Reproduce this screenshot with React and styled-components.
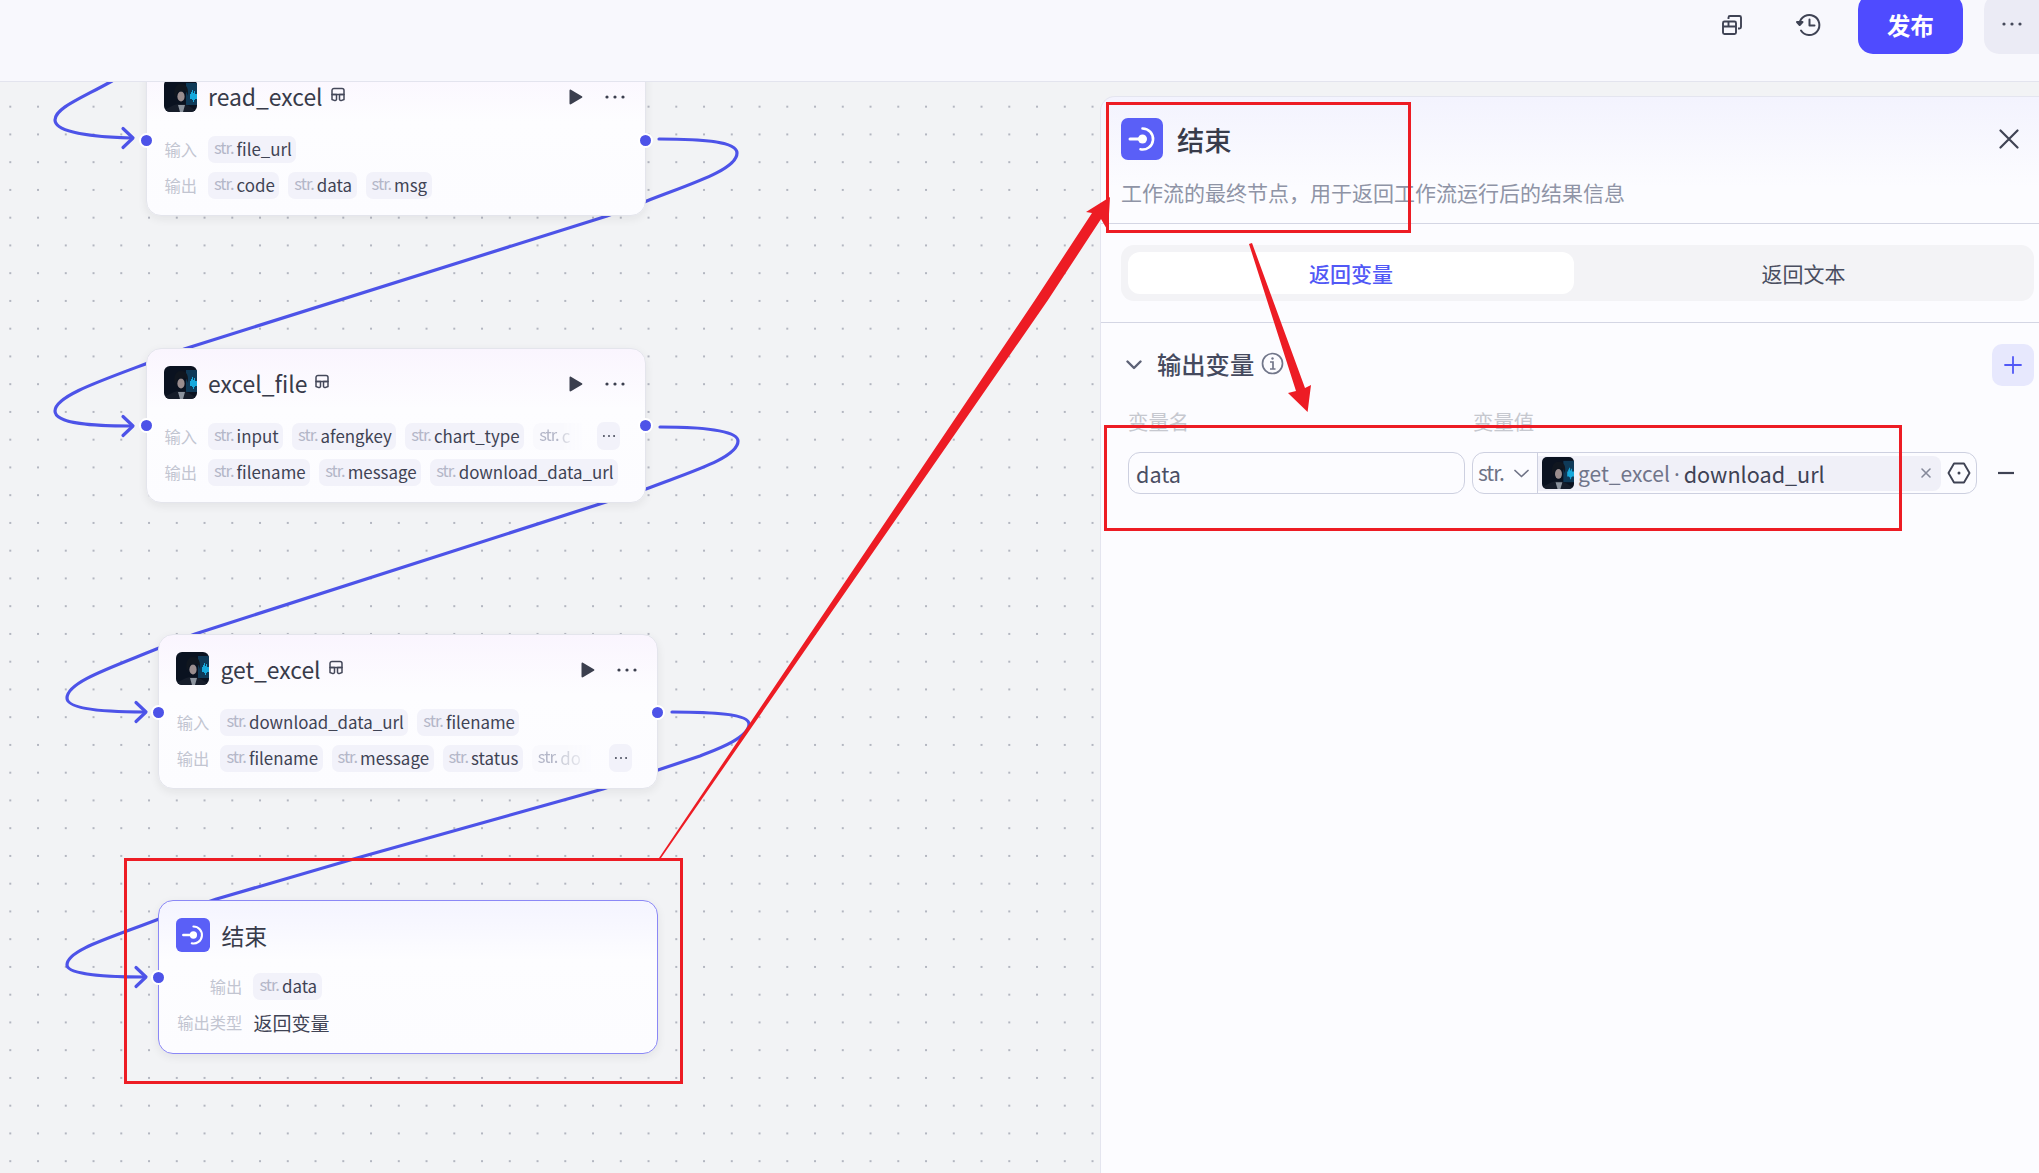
import React from "react";
import styled, { createGlobalStyle } from "styled-components";

const BLUE = "#4d53e8";
const FONT = `"Noto Sans CJK SC", "Noto Sans", sans-serif`;

const GlobalStyle = createGlobalStyle`
  html, body {
    margin: 0;
    padding: 0;
    background: #f2f3f5;
  }
  * {
    box-sizing: border-box;
  }
  body {
    font-family: ${FONT};
  }
`;

const edges = [
  "M112 81 C82 98 55 108 55 120 C55 133 95 137 131 138",
  "M659 139 C700 139 737 141 737 153 C737 170 690 184 645 201.7 L607 216 L185 348.7 C120 375 55 393 55 411 C55 424 95 426 131 426",
  "M660 427 C700 427 738 430 738 441 C738 458 690 472 646 489 L606 502 L195 634 L159 648 C110 668 67 682 67 698 C67 710 110 712 144 712",
  "M672 712 C712 712 749 714 749 724 C749 738 715 750 700 756 L658 770 L603 789 L357 858 L216.5 899 L159 919 C110 938 67 950 67 965 C67 975 110 977 144 977",
];

const arrowTips = [
  [133, 138],
  [133, 426],
  [146, 712],
  [146, 977],
];

const nodes = [
  {
    name: "read_excel",
    left: 146,
    top: -21,
    handleY: 71,
    inputs: ["file_url"],
    outputs: ["code", "data", "msg"],
  },
  {
    name: "excel_file",
    left: 146,
    top: 266,
    handleY: 69,
    inputs: ["input", "afengkey", "chart_type"],
    inputsMore: "c",
    outputs: ["filename", "message", "download_data_url"],
  },
  {
    name: "get_excel",
    left: 158.4,
    top: 552,
    handleY: 70,
    inputs: ["download_data_url", "filename"],
    outputs: ["filename", "message", "status"],
    outputsMore: "do",
  },
];

const Page = styled.div`
  width: 2039px;
  height: 1173px;
  position: relative;
  overflow: hidden;
  display: flex;
  flex-direction: column;
  font-family: ${FONT};
`;

const TopBar = styled.header`
  height: 82px;
  flex: none;
  display: flex;
  justify-content: flex-end;
  align-items: flex-start;
  padding-right: 0;
  background: #f8f8fd;
  border-bottom: 1.5px solid #e3e4ee;
`;

const BarIcon = styled.button`
  width: 40px;
  height: 50px;
  margin-right: ${(p) => p.$gap}px;
  padding: 0;
  border: none;
  background: none;
  color: #3f4354;
  display: flex;
  align-items: center;
  justify-content: center;
`;

const PublishButton = styled.button`
  width: 105px;
  height: 60px;
  margin-top: -6px;
  margin-right: 21px;
  border: none;
  border-radius: 15px;
  background: #4f4bff;
  color: #fff;
  font-family: ${FONT};
  font-size: 23.4px;
  font-weight: 700;
  padding-top: 3px;
`;

const MoreButton = styled.button`
  width: 70px;
  height: 60px;
  margin-top: -6px;
  margin-right: -15px;
  border: none;
  border-radius: 15px;
  background: #ebebf5;
  color: #45495a;
  display: flex;
  justify-content: flex-start;
  align-items: center;
  padding: 0 0 0 17px;
`;

const Main = styled.main`
  flex: 1;
  display: flex;
  min-height: 0;
`;

const Canvas = styled.section`
  width: 1100px;
  flex: none;
  position: relative;
  overflow: hidden;
  background-color: #f2f3f5;
  background-image: radial-gradient(circle, #b3b6c0 0.8px, transparent 1px);
  background-size: 27.75px 27.75px;
  background-position: -3.6px 10.8px;
`;

const EdgeLayer = styled.svg`
  position: absolute;
  left: 0;
  top: 0;
`;

const NodeCard = styled.article`
  position: absolute;
  left: ${(p) => p.$left}px;
  top: ${(p) => p.$top}px;
  width: 500px;
  height: ${(p) => (p.$selected ? 154 : 155)}px;
  padding: 17px;
  border-radius: 15px;
  border: 1.3px solid ${(p) => (p.$selected ? "#8b88f6" : "#e4e5ec")};
  background: linear-gradient(
    180deg,
    ${(p) => (p.$selected ? "#f4f4ff" : "#faf5fe")} 0,
    #fdfdff 60px,
    #fcfcff 100%
  );
  box-shadow: 0 3px 10px rgba(29, 28, 35, 0.07);
`;

const NodeHeader = styled.div`
  display: flex;
  align-items: center;
  height: 33px;
  margin-bottom: ${(p) => p.$gap || 23}px;
`;

const NodeTitle = styled.span`
  margin-left: 11px;
  font-size: 22.9px;
  line-height: 26px;
  color: #383b4a;
`;

const PluginMark = styled.svg`
  margin-left: 7px;
  margin-top: -1px;
  flex: none;
  color: #44485a;
`;

const NodeActions = styled.div`
  margin-left: auto;
  margin-top: 2px;
  display: flex;
  align-items: center;
  gap: 20px;
  padding-right: 2px;
  color: #3b3f4e;
`;

const Handle = styled.i`
  position: absolute;
  left: ${(p) => (p.$side === "left" ? "-8px" : "auto")};
  right: ${(p) => (p.$side === "right" ? "-8px" : "auto")};
  top: ${(p) => p.$y}px;
  width: 15px;
  height: 15px;
  border-radius: 50%;
  background: ${BLUE};
  border: 2px solid #fff;
`;

const PortRow = styled.div`
  position: relative;
  display: flex;
  align-items: center;
  gap: 9px;
  height: 28px;
  margin-bottom: 8px;
  overflow: hidden;
`;

const PortLabel = styled.span`
  flex: none;
  width: ${(p) => p.$width || 34}px;
  margin-right: 2px;
  margin-left: -1px;
  text-align: right;
  font-size: 16.3px;
  color: #c2c5d1;
`;

const Tag = styled.span`
  flex: none;
  display: inline-flex;
  align-items: baseline;
  height: 27px;
  line-height: 26px;
  padding: 0 4.5px 0 6px;
  border-radius: 7px;
  background: #f2f2fa;
  font-size: 16.9px;
  color: #3f4354;
  white-space: nowrap;
`;

const TagType = styled.span`
  margin-right: 3px;
  font-size: 16.5px;
  letter-spacing: -1px;
  color: #b4b7c8;
  position: relative;
  top: -1.5px;
`;

const FadedTag = styled(Tag)`
  width: ${(p) => p.$width}px;
  overflow: hidden;
  background: #f9f9fd;
  color: #d0d2dc;
  -webkit-mask-image: linear-gradient(90deg, #000 45%, transparent 80%);
  mask-image: linear-gradient(90deg, #000 45%, transparent 80%);
`;

const MorePorts = styled.span`
  position: absolute;
  right: 8px;
  top: 0;
  width: 23px;
  height: 28px;
  border-radius: 7px;
  background: #f2f2fa;
  color: #3f4354;
  display: flex;
  align-items: center;
  justify-content: center;
`;

const OutputKind = styled.span`
  font-size: 19px;
  color: #3f4354;
`;

const PanelWrap = styled.div`
  flex: 1;
  padding-top: 14px;
  background: #f2f3f5;
  min-width: 0;
`;

const Panel = styled.aside`
  height: 100%;
  display: flex;
  flex-direction: column;
  border-top: 1.3px solid #e4e5ef;
  border-left: 1.3px solid #e4e5ef;
  border-top-left-radius: 15px;
  background: linear-gradient(180deg, #f3f3fe 0, #fcfcff 90px);
`;

const PanelHead = styled.div`
  height: 127px;
  flex: none;
  padding: 21px 20px 0 20px;
  border-bottom: 1.3px solid #d4d6e4;
`;

const PanelTitleRow = styled.div`
  display: flex;
  align-items: center;
  height: 42px;
`;

const PanelTitle = styled.h1`
  margin: 0 0 0 14px;
  font-size: 27.3px;
  font-weight: 500;
  color: #383b4a;
`;

const CloseIcon = styled.svg`
  margin-left: auto;
  margin-right: 0;
  color: #3f4354;
`;

const PanelDesc = styled.p`
  margin: 16.5px 0 0;
  font-size: 21px;
  line-height: 30px;
  color: #8f94a6;
`;

const TabBar = styled.div`
  flex: none;
  height: 56px;
  margin: 21px 5px 21px 20px;
  padding: 7px;
  display: grid;
  grid-template-columns: 446px 1fr;
  border-radius: 13px;
  background: #f3f3f6;
`;

const Tab = styled.button`
  border: none;
  border-radius: 12px;
  background: ${(p) => (p.$active ? "#fff" : "transparent")};
  color: ${(p) => (p.$active ? "#5158f6" : "#4a4e60")};
  font-family: ${FONT};
  font-size: 21px;
  font-weight: ${(p) => (p.$active ? 500 : 400)};
  padding: 0 0 1px ${(p) => (p.$active ? 0 : 6)}px;
`;

const Section = styled.div`
  flex: 1;
  border-top: 1.3px solid #d4d6e4;
  padding: 21px 5px 0 27px;
  position: relative;
`;

const SectionHead = styled.div`
  display: flex;
  align-items: center;
  height: 42px;
`;

const Chevron = styled.svg`
  margin-left: -2px;
`;

const SectionTitle = styled.h2`
  margin: -3px 0 0 15px;
  font-size: 24.3px;
  font-weight: 500;
  color: #454a5e;
`;

const InfoIcon = styled.svg`
  margin-left: 7px;
  margin-top: -3px;
  color: #71768a;
`;

const AddButton = styled.button`
  width: 42px;
  height: 42px;
  margin-left: auto;
  border: none;
  border-radius: 10px;
  background: #e7e8fd;
  color: #5158f6;
  display: flex;
  align-items: center;
  justify-content: center;
  padding: 0;
`;

const FieldLabels = styled.div`
  display: grid;
  grid-template-columns: 345px 1fr;
  margin-top: 21px;
  font-size: 20.4px;
  line-height: 28px;
  color: #c6c8cf;
`;

const FieldRow = styled.div`
  display: flex;
  align-items: center;
  height: 42px;
  margin-top: 17px;
`;

const NameInput = styled.div`
  width: 337px;
  height: 42px;
  padding-left: 7px;
  border: 1.3px solid #cdd0e0;
  border-radius: 12px;
  font-size: 21.6px;
  line-height: 41px;
  color: #4a4e63;
`;

const ValueBox = styled.div`
  width: 505px;
  height: 42px;
  margin-left: 7px;
  display: flex;
  align-items: center;
  border: 1.3px solid #cdd0e0;
  border-radius: 12px;
`;

const TypeSelect = styled.div`
  width: 65px;
  height: 100%;
  flex: none;
  display: flex;
  align-items: center;
  gap: 10px;
  padding: 0 0 3px 5px;
  border-right: 1.3px solid #cdd0e0;
  font-size: 21px;
  letter-spacing: -1px;
  color: #6f7386;
`;

const TypeCaret = styled.svg`
  margin-top: 4px;
`;

const RefTag = styled.div`
  width: 403px;
  height: 35px;
  flex: none;
  display: flex;
  align-items: center;
  padding-left: 4px;
  border-radius: 0 8px 8px 0;
  background: #f0f0f8;
  font-size: 21.6px;
  color: #3e4254;
`;

const RefNode = styled.span`
  margin-left: 4px;
  font-size: 21px;
  color: #70758a;
`;

const RefDot = styled.span`
  margin: 0 4px;
  font-family: "Noto Sans", sans-serif;
  color: #70758a;
`;

const RefClear = styled.svg`
  margin-left: auto;
  margin-right: 9px;
  color: #85899a;
`;

const HexIcon = styled.svg`
  margin-left: 6px;
  color: #3f4354;
`;

const RemoveIcon = styled.svg`
  margin-left: 21px;
  color: #3f4354;
`;

const RedBox = styled.div`
  position: absolute;
  left: ${(p) => p.$x}px;
  top: ${(p) => p.$y}px;
  width: ${(p) => p.$w}px;
  height: ${(p) => p.$h}px;
  border: 3px solid #ed1c24;
  pointer-events: none;
`;

const ArrowLayer = styled.svg`
  position: absolute;
  left: 0;
  top: 0;
  pointer-events: none;
`;

const AvatarSvg = styled.svg`
  flex: none;
  border-radius: ${(p) => (p.$small ? 5 : 6)}px;
  display: block;
`;

const Avatar = ({ size = 33 }) => (
  <AvatarSvg width={size} height={size} viewBox="0 0 33 33" $small={size < 33}>
    <rect width="33" height="33" fill="#0a1220" />
    <rect x="22" y="4" width="11" height="22" fill="#0f3a58" />
    <path d="M26 15h1v-2h1v-2h1v3h1v-2h1v3h2v5h-2v1h-1v2h-1v-2h-1v-1h-2z" fill="#17a9dc" />
    <path d="M2 33v-3l8-4 4-1h6l5 2 6 4v2z" fill="#161d2a" />
    <path d="M14 26l2 7h3l2-7z" fill="#8c949e" />
    <ellipse cx="17" cy="17.500" rx="3.600" ry="5" fill="#9a8d8e" />
    <path d="M11 19c-2-7 0-14 6-14s8 5 6.500 12c-.5-3-1.500-5-3-5.500-2 1-4.500 1-6 .5-1 2-2.500 4-3.500 7z" fill="#10161f" />
  </AvatarSvg>
);

const EndIconBox = styled.svg`
  flex: none;
  display: block;
`;

const EndIcon = ({ size }) => (
  <EndIconBox width={size} height={size} viewBox="0 0 42 42">
    <rect width="42" height="42" rx="7" fill="#5a5ff7" />
    <path
      d="M21.500 10.500a10.500 10.500 0 1 1-2 20.800"
      fill="none"
      stroke="#fff"
      strokeWidth="2.600"
      strokeLinecap="round"
    />
    <path d="M9 21h11" stroke="#fff" strokeWidth="3" strokeLinecap="round" />
    <circle cx="21.500" cy="21" r="4.500" fill="#fff" />
  </EndIconBox>
);

const Dots = ({ size = 22, r = 1.6 }) => (
  <svg width={size} height={8} viewBox="0 0 22 8" fill="currentColor">
    <circle cx="3" cy="4" r={r} />
    <circle cx="11" cy="4" r={r} />
    <circle cx="19" cy="4" r={r} />
  </svg>
);

const Port = ({ name }) => (
  <Tag>
    <TagType>str.</TagType>
    {name}
  </Tag>
);

const PortLine = ({ label, ports, more, moreWidth }) => (
  <PortRow>
    <PortLabel>{label}</PortLabel>
    {ports.map((p, i) => (
      <Port key={i} name={p} />
    ))}
    {more && (
      <>
        <FadedTag $width={moreWidth}>
          <TagType>str.</TagType>
          {more}
        </FadedTag>
        <MorePorts>
          <Dots size={14} r={1.500} />
        </MorePorts>
      </>
    )}
  </PortRow>
);

const FlowNode = ({ node }) => (
  <NodeCard $left={node.left} $top={node.top}>
    <NodeHeader>
      <Avatar />
      <NodeTitle>{node.name}</NodeTitle>
      <PluginMark width="16" height="16" viewBox="0 0 16 16" fill="none" stroke="currentColor" strokeWidth="1.500" strokeLinejoin="round">
        <path d="M2 7.500V3.500A2 2 0 0 1 4 1.500h8a2 2 0 0 1 2 2v4z" />
        <path d="M2 7.500h4.500v5a1.800 1.800 0 0 1-2.300.900L2 12.500zM14 7.500H9.500v5a1.800 1.800 0 0 0 2.300.900l2.200-.900z" />
      </PluginMark>
      <NodeActions>
        <svg width="18" height="18" viewBox="0 0 18 18">
          <path d="M3.500 2.500c0-.8.800-1.200 1.400-.8l11 6.500c.6.400.6 1.200 0 1.600l-11 6.500c-.6.400-1.400 0-1.400-.8z" fill="currentColor" />
        </svg>
        <Dots />
      </NodeActions>
    </NodeHeader>
    <PortLine label="输入" ports={node.inputs} more={node.inputsMore} moreWidth={64} />
    <PortLine label="输出" ports={node.outputs} more={node.outputsMore} moreWidth={76} />
    <Handle $side="left" $y={node.handleY} />
    <Handle $side="right" $y={node.handleY} />
  </NodeCard>
);

const EndNode = () => (
  <NodeCard $left={158.4} $top={818} $selected>
    <NodeHeader $gap={21}>
      <EndIcon size={34} />
      <NodeTitle>结束</NodeTitle>
    </NodeHeader>
    <PortRow>
      <PortLabel $width={67}>输出</PortLabel>
      <Port name="data" />
    </PortRow>
    <PortRow>
      <PortLabel $width={67}>输出类型</PortLabel>
      <OutputKind>返回变量</OutputKind>
    </PortRow>
    <Handle $side="left" $y={69} />
  </NodeCard>
);

export default function App() {
  return (
    <Page>
      <GlobalStyle />
      <TopBar>
        <BarIcon $gap={37}>
          <svg width="22" height="22" viewBox="0 0 22 22" fill="none" stroke="currentColor" strokeWidth="1.900" strokeLinejoin="round">
            <path d="M7.500 5V3.500A1.500 1.500 0 0 1 9 2h9.500A1.500 1.500 0 0 1 20 3.500V13a1.500 1.500 0 0 1-1.500 1.500H17" />
            <rect x="2" y="7.500" width="13" height="12.500" rx="1.500" />
            <path d="M2 12.500h13M7.500 7.500v5" />
          </svg>
        </BarIcon>
        <BarIcon $gap={29}>
          <svg width="26" height="26" viewBox="0 0 26 26" fill="none" stroke="currentColor" strokeWidth="2" strokeLinecap="round" strokeLinejoin="round">
            <path d="M3.500 11.500A10 10 0 1 1 5 18.500" />
            <path d="M1 10l2.700 3 2.800-3z" fill="currentColor" />
            <path d="M13.500 7.500v6h5" />
          </svg>
        </BarIcon>
        <PublishButton>发布</PublishButton>
        <MoreButton>
          <Dots />
        </MoreButton>
      </TopBar>
      <Main>
        <Canvas>
          <EdgeLayer width="1100" height="1092" viewBox="0 82 1100 1092" fill="none" stroke={BLUE} strokeWidth="3.200" strokeLinecap="round" strokeLinejoin="round">
            {edges.map((d, i) => (
              <path key={i} d={d} />
            ))}
            {arrowTips.map(([x, y], i) => (
              <path key={i} d={`M${x - 10} ${y - 9.500}L${x} ${y}L${x - 10} ${y + 9.500}`} />
            ))}
          </EdgeLayer>
          {nodes.map((n) => (
            <FlowNode key={n.name} node={n} />
          ))}
          <EndNode />
        </Canvas>
        <PanelWrap>
          <Panel>
            <PanelHead>
              <PanelTitleRow>
                <EndIcon size={42} />
                <PanelTitle>结束</PanelTitle>
                <CloseIcon width="20" height="20" viewBox="0 0 20 20" fill="none" stroke="currentColor" strokeWidth="2.200" strokeLinecap="round">
                  <path d="M1.500 1.500l17 17M18.500 1.500l-17 17" />
                </CloseIcon>
              </PanelTitleRow>
              <PanelDesc>工作流的最终节点，用于返回工作流运行后的结果信息</PanelDesc>
            </PanelHead>
            <TabBar>
              <Tab $active>返回变量</Tab>
              <Tab>返回文本</Tab>
            </TabBar>
            <Section>
              <SectionHead>
                <Chevron width="16" height="10" viewBox="0 0 16 10" fill="none" stroke="#5d6276" strokeWidth="2.400" strokeLinecap="round" strokeLinejoin="round">
                  <path d="M1.500 1.500L8 8l6.500-6.500" />
                </Chevron>
                <SectionTitle>输出变量</SectionTitle>
                <InfoIcon width="23" height="23" viewBox="0 0 23 23" fill="none" stroke="currentColor" strokeWidth="1.700">
                  <circle cx="11.500" cy="11.500" r="10" />
                  <path d="M9 10h3v7M9 17h5.500" />
                  <circle cx="11.500" cy="6.500" r="1.200" fill="currentColor" stroke="none" />
                </InfoIcon>
                <AddButton>
                  <svg width="18" height="18" viewBox="0 0 18 18" stroke="currentColor" strokeWidth="1.800" strokeLinecap="round">
                    <path d="M9 1v16M1 9h16" />
                  </svg>
                </AddButton>
              </SectionHead>
              <FieldLabels>
                <span>变量名</span>
                <span>变量值</span>
              </FieldLabels>
              <FieldRow>
                <NameInput>data</NameInput>
                <ValueBox>
                  <TypeSelect>
                    str.
                    <TypeCaret width="15" height="9" viewBox="0 0 15 9" fill="none" stroke="#6f7386" strokeWidth="1.700" strokeLinecap="round" strokeLinejoin="round">
                      <path d="M1 1.500l6.500 6 6.500-6" />
                    </TypeCaret>
                  </TypeSelect>
                  <RefTag>
                    <Avatar size={32} />
                    <RefNode>get_excel</RefNode>
                    <RefDot>·</RefDot>
                    download_url
                    <RefClear width="12" height="12" viewBox="0 0 12 12" stroke="currentColor" strokeWidth="1.600" strokeLinecap="round">
                      <path d="M2 2l8 8M10 2l-8 8" />
                    </RefClear>
                  </RefTag>
                  <HexIcon width="24" height="24" viewBox="0 0 24 24" fill="none" stroke="currentColor" strokeWidth="1.900" strokeLinejoin="round">
                    <path d="M7 2.500h10l5.500 9.500-5.500 9.500H7L1.500 12z" />
                    <circle cx="12" cy="12" r="1.500" fill="currentColor" stroke="none" />
                  </HexIcon>
                </ValueBox>
                <RemoveIcon width="16" height="4" viewBox="0 0 16 4" stroke="currentColor" strokeWidth="2.200">
                  <path d="M0 2h16" />
                </RemoveIcon>
              </FieldRow>
            </Section>
          </Panel>
        </PanelWrap>
      </Main>
      <RedBox $x={124} $y={858} $w={559} $h={226} />
      <RedBox $x={1106} $y={102} $w={305} $h={131} />
      <RedBox $x={1104} $y={425} $w={798} $h={106} />
      <ArrowLayer width="2039" height="1173" viewBox="0 0 2039 1173">
        <polygon points="659,858 1035,300 1092,213 1086,212 1110,197 1108,231 1101,219 1048,300 661,858" fill="#ed1c24" />
        <polygon points="1249,244 1296,391 1288,393 1307.600,412 1311,385 1305,388 1252,243" fill="#ed1c24" />
      </ArrowLayer>
    </Page>
  );
}
